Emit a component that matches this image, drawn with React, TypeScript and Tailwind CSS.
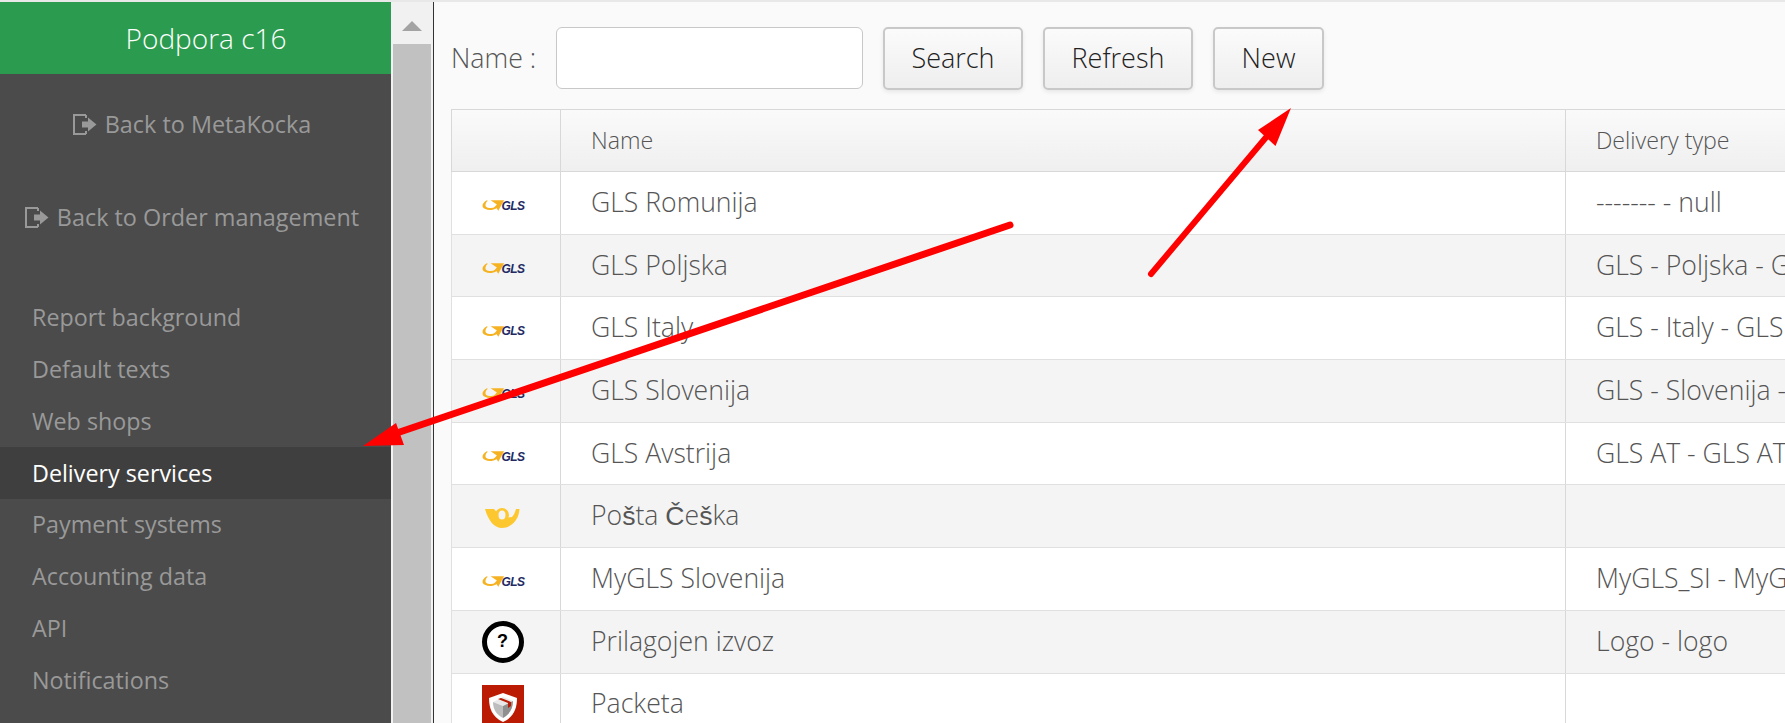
import React from "react";

type RowProps = {
  logo: "gls" | "posta" | "unknown" | "packeta";
  name: React.ReactNode;
  type: string;
};

const rows: RowProps[] = [
  { logo: "gls", name: "GLS Romunija", type: "------- - null" },
  { logo: "gls", name: "GLS Poljska", type: "GLS - Poljska - GLS - Poljska" },
  { logo: "gls", name: "GLS Italy", type: "GLS - Italy - GLS - Italy" },
  { logo: "gls", name: "GLS Slovenija", type: "GLS - Slovenija - GLS - Slovenija" },
  { logo: "gls", name: "GLS Avstrija", type: "GLS AT - GLS AT" },
  {
    logo: "posta",
    name: (
      <>
        Po<span className="font-['Liberation_Sans',sans-serif] font-normal">š</span>ta{" "}
        <span className="font-['Liberation_Sans',sans-serif] font-normal">Č</span>e
        <span className="font-['Liberation_Sans',sans-serif] font-normal">š</span>ka
      </>
    ),
    type: "",
  },
  { logo: "gls", name: "MyGLS Slovenija", type: "MyGLS_SI - MyGLS_SI" },
  { logo: "unknown", name: "Prilagojen izvoz", type: "Logo - logo" },
  { logo: "packeta", name: "Packeta", type: "" },
];

const menu = [
  "Report background",
  "Default texts",
  "Web shops",
  "Delivery services",
  "Payment systems",
  "Accounting data",
  "API",
  "Notifications",
];

const ExitIcon = () => (
  <svg width="24" height="21" viewBox="0 0 24 21" className="mr-[8px] shrink-0">
    <path d="M13 1H1v19h12" fill="none" stroke="#999" strokeWidth="2" />
    <path d="M13 1v3M13 17v3" fill="none" stroke="#999" strokeWidth="2" />
    <path d="M9 7.5h6V3.5l8.5 7-8.5 7v-4H9z" fill="#999" />
  </svg>
);

const GlsLogo = () => (
  <div className="mt-[6px] flex w-[42px] items-center">
    <svg width="23" height="13" viewBox="0 0 24 13" className="shrink-0">
      <path d="M5 1C0 4-1 8 3 10c4 2 9 1.500 12-1l-1-1C11 9.500 6 9.500 4 7.500 3 6 4 3 6 1.500z" fill="#f5b324" />
      <path d="M9 1h14l-6 11-2-3-4 1.500 4.500-5z" fill="#f5b324" />
    </svg>
    <span className="-ml-[3px] font-['Liberation_Sans',sans-serif] text-[12px] leading-none font-bold tracking-[-0.6px] text-[#232a63] italic">GLS</span>
  </div>
);

const PostaLogo = () => (
  <svg width="35" height="20" viewBox="0 0 35 20" className="mt-[4px]">
    <path d="M0 1h9l8 9 10-1c2-2 3-5 4-8h3.500C34 12 26 20 17 20 9 20 3 12 0 1z" fill="#fdc82f" />
    <ellipse cx="17" cy="7" rx="7" ry="7" fill="#fdc82f" />
    <ellipse cx="17" cy="7" rx="3.500" ry="4.500" fill="#f4f4f4" />
  </svg>
);

const UnknownLogo = () => (
  <div className="flex h-[42px] w-[42px] items-center justify-center rounded-full border-[5px] border-black bg-white font-['Liberation_Sans',sans-serif] text-[18px] font-bold text-black">
    ?
  </div>
);

const PacketaLogo = () => (
  <svg width="42" height="42" viewBox="0 0 42 42" className="mt-[3px]">
    <rect width="42" height="42" fill="#ba1b02" />
    <path d="M21 8l14 5c0 10-3 19-14 24C10 32 7 23 7 13z" fill="#fff" />
    <path d="M21 12l10 4-10 5-10-4z" fill="#e8e8e8" />
    <path d="M11 17l10 4v12c-6-3-10-8-10-16z" fill="#bdbdbd" />
    <path d="M31 16l-10 5v12c6-3 10-9 10-17z" fill="#8f8f8f" />
    <path d="M16 14l10 4v5l3-2v-4L19 13z" fill="#ba1b02" />
  </svg>
);

const Logo = ({ logo }: { logo: RowProps["logo"] }) => {
  if (logo === "gls") return <GlsLogo />;
  if (logo === "posta") return <PostaLogo />;
  if (logo === "unknown") return <UnknownLogo />;
  return <PacketaLogo />;
};

const Btn = ({ label, width }: { label: string; width: string }) => (
  <button
    className={`h-[63px] ${width} rounded-[5px] border-2 border-[#c8c8c8] bg-gradient-to-b from-[#fbfbfb] to-[#eeeeee] text-[27px] font-light text-[#222] shadow-[0_2px_4px_rgba(0,0,0,0.08)]`}
  >
    {label}
  </button>
);

export default function App() {
  return (
    <div className="relative flex h-[723px] w-[1785px] flex-col overflow-hidden bg-[#fafafa] font-['Open_Sans',sans-serif]">
      <div className="h-[2px] shrink-0 bg-[#e8e8e8]" />
      <div className="flex min-h-0 flex-1">
        {/* Sidebar */}
        <div className="flex w-[391px] shrink-0 flex-col bg-[#4b4b4b]">
          <div className="flex h-[72px] shrink-0 items-center justify-center bg-[#2b9c4f] pl-[21px] text-[28px] font-light text-white">
            Podpora c16
          </div>
          <div className="mt-[4px] flex h-[93px] shrink-0 items-center justify-center pr-[7px] text-[23.4px] text-[#999]">
            <ExitIcon />
            Back to MetaKocka
          </div>
          <div className="flex h-[93px] shrink-0 items-center justify-center pr-[7px] text-[23.4px] text-[#999]">
            <ExitIcon />
            Back to Order management
          </div>
          <div className="mt-[28px] flex flex-col">
            {menu.map((item) =>
              item === "Delivery services" ? (
                <div key={item} className="flex h-[52px] items-center bg-[#3f3f3f] pl-[32px] text-[23.3px] text-white">
                  {item}
                </div>
              ) : (
                <div key={item} className="flex h-[51.7px] items-center pl-[32px] text-[23.3px] text-[#999]">
                  {item}
                </div>
              ),
            )}
          </div>
        </div>

        {/* Scrollbar */}
        <div className="flex w-[43px] shrink-0 flex-col border-r border-[#333] bg-[#f1f1f1] px-[2px]">
          <div className="flex h-[42px] shrink-0 items-center justify-center">
            <div className="mt-[6px] h-0 w-0 border-x-[10px] border-b-[10px] border-x-transparent border-b-[#a3a3a3]" />
          </div>
          <div className="flex-1 bg-[#c1c1c1]" />
        </div>

        {/* Content */}
        <div className="min-w-0 flex-1 overflow-hidden pl-[17px]">
          <div className="flex h-[107px] items-start pt-[25px]">
            <label className="mr-[20px] flex h-[62px] w-[85px] items-center text-[26.8px] font-light whitespace-nowrap text-[#555]">Name :</label>
            <input className="h-[62px] w-[307px] rounded-[6px] border border-[#c8c8c8] bg-white" />
            <div className="ml-[20px] flex gap-[20px]">
              <Btn label="Search" width="w-[140px]" />
              <Btn label="Refresh" width="w-[150px]" />
              <Btn label="New" width="w-[111px]" />
            </div>
          </div>
          <table className="w-[1500px] table-fixed border-collapse border border-[#d8d8d8] text-left font-light text-[#555]">
            <thead>
              <tr className="h-[62px] bg-gradient-to-b from-[#fafafa] to-[#efefef] text-[23.2px]">
                <th className="w-[109px] border border-[#d8d8d8]" />
                <th className="w-[1005px] border border-[#d8d8d8] pl-[30px] font-light">Name</th>
                <th className="border border-[#d8d8d8] pl-[30px] font-light">Delivery type</th>
              </tr>
            </thead>
            <tbody>
              {rows.map((row, i) => (
                <tr key={i} className={`h-[62.7px] text-[26.6px] ${i % 2 === 1 ? "bg-[#f4f4f4]" : "bg-white"}`}>
                  <td className="border border-[#e0e0e0] border-r-[#d8d8d8]">
                    <div className="flex h-[60px] items-center justify-center pr-[7px]">
                      <Logo logo={row.logo} />
                    </div>
                  </td>
                  <td className="border border-[#e0e0e0] border-r-[#d8d8d8] pl-[30px]">{row.name}</td>
                  <td className="overflow-hidden border border-[#e0e0e0] pl-[30px] whitespace-nowrap">{row.type}</td>
                </tr>
              ))}
            </tbody>
          </table>
        </div>
      </div>

      {/* Annotation arrows drawn on top of the screenshot */}
      <svg width="1785" height="723" className="pointer-events-none absolute top-0 left-0">
        <path d="M1010 225L385 437" stroke="#ff0000" strokeWidth="7" strokeLinecap="round" fill="none" />
        <path d="M363 446L396 423L404 445z" fill="#ff0000" />
        <path d="M1151 274L1268 135" stroke="#ff0000" strokeWidth="6" strokeLinecap="round" fill="none" />
        <path d="M1291 108L1258 130L1275.5 146z" fill="#ff0000" />
      </svg>
    </div>
  );
}
